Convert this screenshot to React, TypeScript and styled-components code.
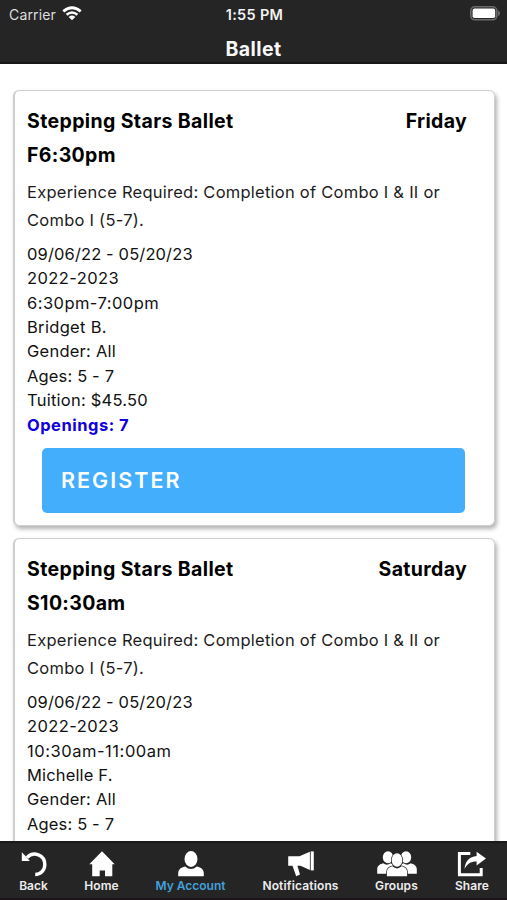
import React from 'react';
import styled, { createGlobalStyle } from 'styled-components';

const GlobalStyle = createGlobalStyle`
  * { box-sizing: border-box; }
  html, body { margin: 0; background: #fff; }
  body { font-family: Inter, "Liberation Sans", sans-serif; overflow: hidden; }
`;

const Screen = styled.div`
  width: 507px;
  height: 900px;
  display: flex;
  flex-direction: column;
  background: #fff;
`;

const Header = styled.header`
  flex: none;
  height: 64px;
  background: #252525;
  border-bottom: 2px solid #181818;
  color: #fff;
`;

const StatusBar = styled.div`
  height: 28px;
  padding: 0 7px 0 9px;
  display: grid;
  grid-template-columns: 1fr auto 1fr;
  align-items: center;
`;

const Carrier = styled.div`
  display: flex;
  align-items: center;
  gap: 6px;
  font-size: 14px;
  letter-spacing: 0.15px;
  color: #dedede;
`;

const Clock = styled.div`
  font-size: 14.5px;
  font-weight: 600;
  letter-spacing: 0.3px;
  color: #f2f2f2;
  transform: translateY(-0.5px);
`;

const BatterySlot = styled.div`
  display: flex;
  justify-content: flex-end;
`;

const Title = styled.h1`
  margin: 0;
  padding-top: 1px;
  text-align: center;
  font-size: 19.5px;
  line-height: 40px;
  font-weight: 700;
  letter-spacing: 0.4px;
  color: #f8f8f8;
`;

const List = styled.main`
  flex: 1;
  min-height: 0;
  overflow: hidden;
  padding: 26px 12px 0 13px;
  display: flex;
  flex-direction: column;
  gap: 12px;
`;

const Card = styled.article`
  flex: none;
  height: 436px;
  padding: 13px 27px 0 12px;
  border: solid #cfcfcf;
  border-width: 1px 1px 1px 2px;
  border-radius: 6px;
  box-shadow: 2px 3px 4px rgba(0, 0, 0, 0.3);
  background: #fff;
  color: #000;
`;

const CardHead = styled.div`
  display: flex;
  justify-content: space-between;
  font-size: 19.5px;
  line-height: 34px;
  font-weight: 700;
  letter-spacing: 0.38px;
`;

const Heading = styled.h2`
  margin: 0;
  font: inherit;
`;

const Code = styled.div`
  letter-spacing: 0.35px;
`;

const Day = styled.div<{ $spacing: number }>`
  letter-spacing: ${(p) => p.$spacing}px;
`;

const Description = styled.p`
  margin: 6px -12px 7px 0;
  font-size: 16.5px;
  line-height: 28.4px;
  letter-spacing: 0.25px;
  color: #1c1c1c;
`;

const Detail = styled.div<{ $spacing: number }>`
  font-size: 16.5px;
  line-height: 24.4px;
  letter-spacing: ${(p) => p.$spacing}px;
  color: #111;
`;

const Openings = styled(Detail)`
  font-weight: 700;
  color: #1100dc;
`;

const Register = styled.button`
  display: block;
  width: 423px;
  height: 65px;
  margin: 11px 0 0 15px;
  padding: 0 0 0 19px;
  border: 0;
  border-radius: 5px;
  background: #42aefc;
  color: #fff;
  text-align: left;
  font: 600 21.5px/65px Inter, sans-serif;
  letter-spacing: 2.02px;
`;

const TabBar = styled.nav`
  flex: none;
  height: 59px;
  display: grid;
  grid-template-columns: 67px 69px 109px 111px 81px 70px;
  background: #252525;
  border-top: 2px solid #1a1a1a;
  border-bottom: 2px solid #1b1418;
`;

const Tab = styled.a<{ $active?: boolean; $spacing: number }>`
  display: flex;
  flex-direction: column;
  align-items: center;
  padding-top: 8px;
  font-size: 12px;
  line-height: 16px;
  font-weight: 600;
  letter-spacing: ${(p) => p.$spacing}px;
  white-space: nowrap;
  color: ${(p) => (p.$active ? '#43a0dc' : '#ededed')};

  svg { display: block; margin-bottom: 1px; }
`;

const WifiIcon = () => (
  <svg width="20" height="16" viewBox="0 0 20 16" fill="none" stroke="#fff">
    <path d="M1.3 5.4Q10 -1.9 18.7 5.4" strokeWidth="2.8" />
    <path d="M4.6 8.8Q10 4.2 15.4 8.8" strokeWidth="2.6" />
    <path d="M6.7 10.9Q10 8.2 13.3 10.9L10 14.2Z" fill="#fff" stroke="none" />
  </svg>
);

const BatteryIcon = () => (
  <svg width="31" height="16" viewBox="0 0 31 16">
    <rect x="1.8" y="0.8" width="26" height="13" rx="4" fill="#252525" stroke="#6a6a6a" strokeWidth="1.6" />
    <rect x="3.6" y="2.6" width="22.6" height="9.4" rx="1.8" fill="#fff" />
    <path d="M29 4.6Q31 5.4 31 7.3T29 10Z" fill="#6a6a6a" />
  </svg>
);

const BackIcon = () => (
  <svg width="26" height="26" viewBox="0 0 26 26">
    <path d="M6 6.6C12.5 -0.5 23.8 4 23.8 13.5C23.8 19.7 19.3 23.5 14.2 23.5" fill="none" stroke="#fff" strokeWidth="3.4" />
    <path d="M0.8 1.2L4 4.5L8.7 9.8V10H0.8Z" fill="#fff" />
  </svg>
);

const HomeIcon = () => (
  <svg width="26" height="26" viewBox="0 0 26 26" fill="#fff">
    <path d="M13 0.2L25.7 13.2H23.3V25.2H16V19.4H10.7V25.2H3.2V13.2H0.3Z" />
  </svg>
);

const AccountIcon = () => (
  <svg width="26" height="26" viewBox="0 0 26 26" fill="#fff">
    <ellipse cx="13" cy="8" rx="6.5" ry="7.9" />
    <path d="M0.2 25.3V22C0.5 17.5 4.1 16 7.2 15.4Q13 20.5 18.8 15.4C22 16 25.6 17.5 25.8 22V25.3Z" />
  </svg>
);

const MegaphoneIcon = () => (
  <svg width="26" height="26" viewBox="0 0 26 26" fill="#fff">
    <path d="M0.2 5.3H11.4L21.9 0.8V19L12.5 14.8H9.4L12 23.4L8.2 25.2L4.5 14.8H0.2Z" />
    <path d="M22.7 0.4H25.8V19.4H22.7Z" />
  </svg>
);

const GroupsIcon = () => (
  <svg width="40" height="26" viewBox="0 0 40 26" fill="#fff">
    <ellipse cx="11" cy="6.2" rx="5.2" ry="6" />
    <ellipse cx="29" cy="6.2" rx="5.2" ry="6" />
    <path d="M0.2 22.8V18C0.4 14.7 3 13.3 6.2 12.3Q9.8 15.1 13.6 12.3L16 13.5V22.8Z" />
    <path d="M39.8 22.8V18C39.6 14.7 37 13.3 33.8 12.3Q30.2 15.1 26.4 12.3L24 13.5V22.8Z" />
    <g stroke="#252525" strokeWidth="1.4" paintOrder="stroke">
      <path d="M9.9 25.2V21C10.2 17.3 12.6 16 15.4 15.3Q20 19.5 24.6 15.3C27.6 16 29.9 17.3 30.1 21V25.2Z" />
      <ellipse cx="20" cy="9" rx="5.3" ry="6.7" />
    </g>
  </svg>
);

const ShareIcon = () => (
  <svg width="30" height="26" viewBox="0 0 30 26">
    <path d="M13.3 2.4H2.4V23.7H24.2V17" fill="none" stroke="#fff" strokeWidth="3" />
    <path d="M19.6 0.8L29 7.6L19.6 14.4V10.6C14 10.5 10 13 7.5 18C8.2 10 12.5 5.6 19.6 5Z" fill="#fff" />
  </svg>
);

interface Course {
  code: string;
  day: string;
  daySpacing: number;
  details: [string, number][];
  openings?: number;
}

const courses: Course[] = [
  {
    code: 'F6:30pm',
    day: 'Friday',
    daySpacing: 0.3,
    details: [
      ['09/06/22 - 05/20/23', 0.13],
      ['2022-2023', 0.42],
      ['6:30pm-7:00pm', 0.45],
      ['Bridget B.', 0.32],
      ['Gender: All', 0.24],
      ['Ages: 5 - 7', 0.15],
      ['Tuition: $45.50', 0.24],
    ],
    openings: 7,
  },
  {
    code: 'S10:30am',
    day: 'Saturday',
    daySpacing: 0.32,
    details: [
      ['09/06/22 - 05/20/23', 0.13],
      ['2022-2023', 0.42],
      ['10:30am-11:00am', 0.54],
      ['Michelle F.', 0.15],
      ['Gender: All', 0.24],
      ['Ages: 5 - 7', 0.15],
    ],
  },
];

export default function App() {
  return (
    <>
      <GlobalStyle />
      <Screen>
        <Header>
          <StatusBar>
            <Carrier>Carrier <WifiIcon /></Carrier>
            <Clock>1:55 PM</Clock>
            <BatterySlot><BatteryIcon /></BatterySlot>
          </StatusBar>
          <Title>Ballet</Title>
        </Header>
        <List>
          {courses.map((c) => (
            <Card key={c.code}>
              <CardHead>
                <Heading>
                  Stepping Stars Ballet
                  <Code>{c.code}</Code>
                </Heading>
                <Day $spacing={c.daySpacing}>{c.day}</Day>
              </CardHead>
              <Description>
                Experience Required: Completion of Combo I &amp; II or Combo I (5-7).
              </Description>
              {c.details.map(([text, spacing]) => (
                <Detail key={text} $spacing={spacing}>{text}</Detail>
              ))}
              {c.openings !== undefined && (
                <>
                  <Openings $spacing={0.5}>Openings: {c.openings}</Openings>
                  <Register>REGISTER</Register>
                </>
              )}
            </Card>
          ))}
        </List>
        <TabBar>
          <Tab $spacing={0}><BackIcon />Back</Tab>
          <Tab $spacing={0.12}><HomeIcon />Home</Tab>
          <Tab $active $spacing={0}><AccountIcon />My Account</Tab>
          <Tab $spacing={0.15}><MegaphoneIcon />Notifications</Tab>
          <Tab $spacing={0.1}><GroupsIcon />Groups</Tab>
          <Tab $spacing={0.1}><ShareIcon />Share</Tab>
        </TabBar>
      </Screen>
    </>
  );
}
